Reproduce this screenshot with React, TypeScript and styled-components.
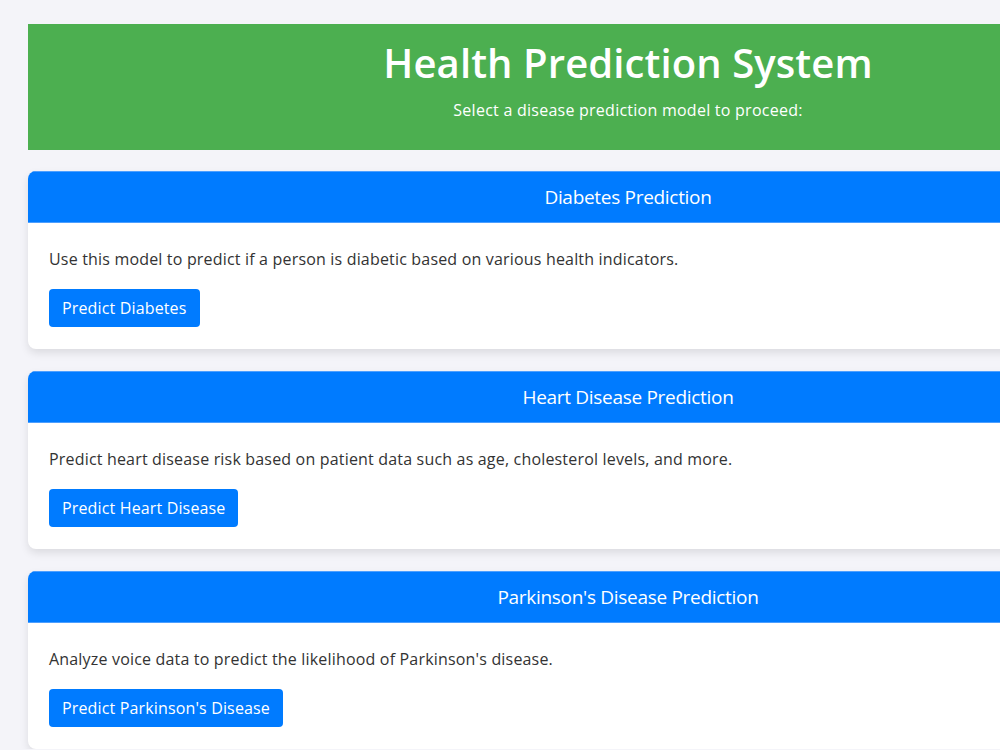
import styled, { createGlobalStyle } from "styled-components";

const GlobalStyle = createGlobalStyle`
  body {
    margin: 0;
    background: #f4f4f9;
    font-family: "Open Sans", "Noto Sans", sans-serif;
    color: #212529;
  }
`;

const Page = styled.div`
  width: 1200px;
  padding: 24px 0 0 28px;
`;

const Hero = styled.header`
  background: #4caf50;
  color: #fff;
  text-align: center;
  height: 126px;
  box-sizing: border-box;
  padding-top: 13px;
`;

const Title = styled.h1`
  margin: 0;
  font-size: 40px;
  font-weight: 600;
  line-height: 52px;
  letter-spacing: 0.1px;
`;

const Subtitle = styled.p`
  margin: 9px 0 0;
  font-size: 16px;
  line-height: 24px;
  letter-spacing: 0.25px;
`;

const CardList = styled.div`
  display: flex;
  flex-direction: column;
  gap: 22px;
  margin-top: 21px;
`;

const Card = styled.section`
  background: #fff;
  border-radius: 8px;
  overflow: hidden;
  box-shadow: 0 4px 8px rgba(0, 0, 0, 0.1);
`;

const CardHeader = styled.h5`
  margin: 0;
  background: #007bff;
  color: #fff;
  text-align: center;
  font-size: 19px;
  font-weight: 400;
  line-height: 26px;
  padding: 12px 0;
  border-top: 1px solid #4d9fff;
  border-bottom: 1px solid #4d9fff;
  letter-spacing: -0.3px;
`;

const CardBody = styled.div`
  padding: 24px 21px 22px;
`;

const CardText = styled.p`
  margin: 0 0 18px;
  font-size: 16px;
  line-height: 24px;
  color: #333;
  letter-spacing: 0.18px;
`;

const Button = styled.button`
  display: block;
  height: 38px;
  background: #007bff;
  color: #fff;
  border: none;
  border-radius: 4px;
  font-family: inherit;
  font-size: 16px;
  line-height: 24px;
  padding: 0 13px;
  letter-spacing: 0.15px;
  cursor: pointer;
`;

const MODELS = [
  {
    title: "Diabetes Prediction",
    text: "Use this model to predict if a person is diabetic based on various health indicators.",
    action: "Predict Diabetes",
  },
  {
    title: "Heart Disease Prediction",
    text: "Predict heart disease risk based on patient data such as age, cholesterol levels, and more.",
    action: "Predict Heart Disease",
  },
  {
    title: "Parkinson's Disease Prediction",
    text: "Analyze voice data to predict the likelihood of Parkinson's disease.",
    action: "Predict Parkinson's Disease",
  },
];

export default function App() {
  return (
    <>
      <GlobalStyle />
      <Page>
        <Hero>
          <Title>Health Prediction System</Title>
          <Subtitle>Select a disease prediction model to proceed:</Subtitle>
        </Hero>
        <CardList>
          {MODELS.map((m, i) => (
            <Card key={i}>
              <CardHeader>{m.title}</CardHeader>
              <CardBody>
                <CardText>{m.text}</CardText>
                <Button>{m.action}</Button>
              </CardBody>
            </Card>
          ))}
        </CardList>
      </Page>
    </>
  );
}
